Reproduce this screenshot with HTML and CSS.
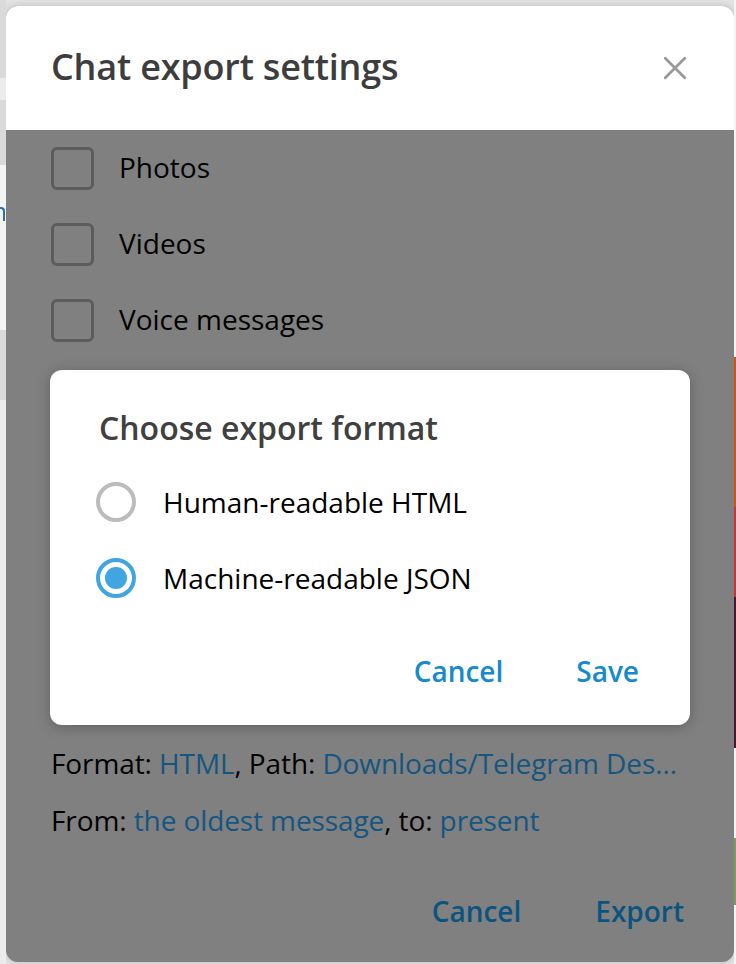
FILE: index.html
```html
<!DOCTYPE html>
<html lang="en">
<head>
<meta charset="utf-8">
<title>Chat export settings</title>
<link rel="stylesheet" href="styles.css">
</head>
<body>
<div class="screen">
  <div class="strip strip-left">
    <div class="band b-grey" style="height:78px"></div>
    <div class="band b-light" style="height:22px"></div>
    <div class="band b-grey" style="height:65px"></div>
    <div class="band b-white" style="height:165px"><span class="peek"></span></div>
    <div class="band b-grey" style="height:70px"></div>
    <div class="band b-light" style="height:564px"></div>
  </div>
  <div class="dialog">
    <header class="dialog-head">
      <h1 class="dialog-title">Chat export settings</h1>
      <button class="close" aria-label="Close">
        <svg viewBox="0 0 24 24" width="26" height="26"><path d="M3 3 L21 21 M21 3 L3 21" stroke="#999" stroke-width="2.6" stroke-linecap="round" fill="none"/></svg>
      </button>
    </header>
    <div class="dialog-body">
      <div class="check-row"><span class="checkbox"></span><span class="check-label">Photos</span></div>
      <div class="check-row"><span class="checkbox"></span><span class="check-label">Videos</span></div>
      <div class="check-row"><span class="checkbox"></span><span class="check-label">Voice messages</span></div>
      <div class="hidden-area"></div>
      <p class="info">Format: <span class="link">HTML</span>, Path: <span class="link">Downloads/Telegram Des...</span></p>
      <p class="info">From: <span class="link">the oldest message</span>, to: <span class="link">present</span></p>
      <div class="actions dim-actions">
        <span class="btn dim-btn">Cancel</span>
        <span class="btn dim-btn">Export</span>
      </div>

      <div class="modal">
        <h2 class="modal-title">Choose export format</h2>
        <div class="radio-row"><span class="radio"></span><span class="radio-label">Human-readable HTML</span></div>
        <div class="radio-row"><span class="radio checked"></span><span class="radio-label">Machine-readable JSON</span></div>
        <div class="actions modal-actions">
          <span class="btn modal-btn">Cancel</span>
          <span class="btn modal-btn">Save</span>
        </div>
      </div>
    </div>
  </div>
  <div class="strip strip-right">
    <div class="band b-white" style="height:357px"></div>
    <div class="band b-orange" style="height:150px"></div>
    <div class="band b-red" style="height:90px"></div>
    <div class="band b-purple" style="height:151px"></div>
    <div class="band b-white" style="height:90px"></div>
    <div class="band b-green" style="height:67px"></div>
    <div class="band b-white" style="height:59px"></div>
  </div>
</div>
</body>
</html>
```

FILE: styles.css
```css
* { box-sizing: border-box; }
html, body { margin: 0; padding: 0; }
body {
  width: 736px;
  height: 964px;
  overflow: hidden;
  background: #e4e4e4;
  font-family: "Open Sans", "Noto Sans", sans-serif;
}
.screen {
  display: flex;
  height: 964px;
}
.strip {
  display: flex;
  flex-direction: column;
  overflow: hidden;
}
.strip-left { width: 6px; flex: none; }
.strip-right { width: 2px; flex: none; }
.band { flex: none; position: relative; }
.b-grey { background: #dadada; }
.b-light { background: #ececec; }
.b-white { background: #f4f4f4; }
.b-orange { background: #d4500e; }
.b-red { background: #c8343a; }
.b-purple { background: #4a1530; }
.b-green { background: #7e9a5c; }
.peek {
  position: absolute;
  left: 0;
  top: 42px;
  width: 5px;
  height: 14px;
  border-right: 2px solid #2a6fb0;
  border-top: 2px solid #2a6fb0;
  border-radius: 0 4px 0 0;
}

.dialog {
  flex: none;
  width: 728px;
  height: 956px;
  margin-top: 6px;
  border-radius: 12px;
  background: #808080;
  overflow: hidden;
  display: flex;
  flex-direction: column;
  box-shadow: 0 0 8px rgba(0,0,0,0.18);
}
.dialog-head {
  height: 124px;
  flex: none;
  background: #fff;
  display: flex;
  align-items: center;
  justify-content: space-between;
  padding: 0 46px 0 45px;
}
.dialog-title {
  margin: 0;
  font-size: 36px;
  font-weight: 600;
  color: #3d3d3d;
  letter-spacing: -0.2px;
  padding-bottom: 4px;
}
.close {
  border: 0;
  background: none;
  padding: 0;
  width: 26px;
  height: 26px;
  display: flex;
}

.dialog-body {
  position: relative;
  flex: 1;
  padding-left: 45px;
  display: flex;
  flex-direction: column;
}
.check-row {
  height: 76px;
  display: flex;
  align-items: center;
  gap: 25px;
  padding-bottom: 2px;
}
.checkbox {
  width: 43px;
  height: 43px;
  border: 3px solid #5c5c5c;
  border-radius: 6px;
  margin-top: 2px;
}
.check-label {
  font-size: 28px;
  color: #000;
}
.hidden-area { height: 376px; flex: none; }
.info {
  margin: 0;
  height: 57px;
  display: flex;
  align-items: center;
  font-size: 28px;
  letter-spacing: -0.1px;
  color: #000;
  white-space: pre;
}
.link { color: #155680; }
.actions {
  display: flex;
  justify-content: flex-end;
}
.dim-actions {
  margin-top: 44px;
  gap: 74px;
  padding-right: 50px;
}
.btn {
  font-size: 28px;
  font-weight: 600;
}
.dim-btn { color: #0c5480; }

.modal {
  position: absolute;
  left: 44px;
  top: 240px;
  width: 640px;
  height: 355px;
  background: #fff;
  border-radius: 12px;
  box-shadow: 0 2px 14px rgba(0,0,0,0.25);
  padding: 0 0 0 46px;
  display: flex;
  flex-direction: column;
}
.modal-title {
  margin: 0;
  height: 114px;
  padding-top: 36px;
  padding-left: 3px;
  font-size: 32px;
  font-weight: 600;
  color: #404040;
  line-height: 44px;
}
.radio-row {
  height: 76px;
  display: flex;
  align-items: center;
  gap: 27px;
  margin-top: -20px;
}
.radio-row + .radio-row { margin-top: 0; }
.radio {
  width: 40px;
  height: 40px;
  border-radius: 50%;
  border: 4px solid #bcbcbc;
  flex: none;
  position: relative;
}
.radio.checked { border-color: #40a5e0; }
.radio.checked::after {
  content: "";
  position: absolute;
  left: 5px; top: 5px;
  width: 22px; height: 22px;
  border-radius: 50%;
  background: #40a5e0;
}
.radio-label {
  font-size: 28px;
  color: #000;
}
.modal-actions {
  margin-top: 36px;
  gap: 73px;
  padding-right: 51px;
}
.modal-btn { color: #168acd; }
```
